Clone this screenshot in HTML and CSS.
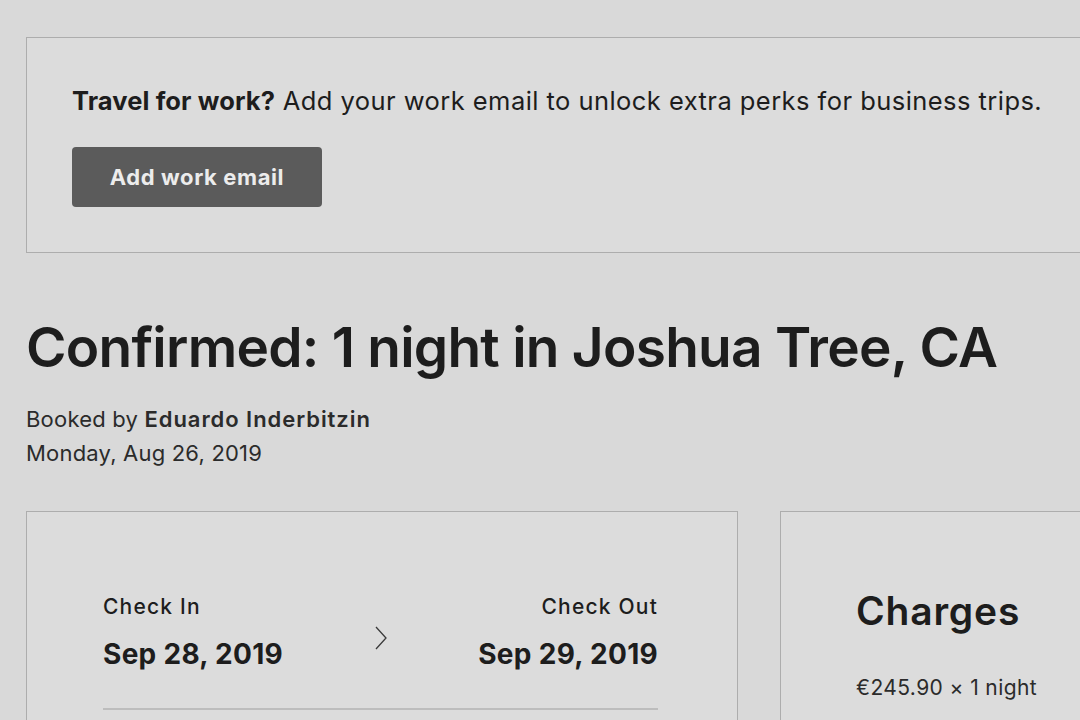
FILE: index.html
```html
<!DOCTYPE html>
<html lang="en">
<head>
<meta charset="utf-8">
<title>Trip confirmed</title>
<link rel="stylesheet" href="styles.css">
</head>
<body>
<div class="page">
  <section class="card promo">
    <p class="promo-text"><strong>Travel for work?</strong> Add your work email to unlock extra perks for business trips.</p>
    <button class="btn">Add work email</button>
  </section>

  <header class="title-block">
    <h1 class="title">Confirmed: 1 night in Joshua Tree, CA</h1>
    <p class="meta">Booked by <strong>Eduardo Inderbitzin</strong></p>
    <p class="meta">Monday, Aug 26, 2019</p>
  </header>

  <div class="columns">
    <section class="card stay">
      <div class="dates">
        <div class="date">
          <div class="date-label">Check In</div>
          <div class="date-value">Sep 28, 2019</div>
        </div>
        <svg class="chev" width="14" height="26" viewBox="0 0 14 26"><path d="M2 2 L12 13 L2 24" fill="none" stroke="#3a3a3a" stroke-width="1.3"/></svg>
        <div class="date right">
          <div class="date-label">Check Out</div>
          <div class="date-value">Sep 29, 2019</div>
        </div>
      </div>
      <div class="divider"></div>
    </section>
    <section class="card charges">
      <h2 class="charges-title">Charges</h2>
      <p class="charge-line">€245.90 × 1 night</p>
    </section>
  </div>
</div>
</body>
</html>
```

FILE: styles.css
```css
html, body {
  margin: 0;
  padding: 0;
  background: #d9d9d9;
  overflow: hidden;
  height: 720px;
}
body {
  font-family: Inter, "Noto Sans", sans-serif;
  color: #1d1d1d;
}
.page {
  width: 1120px;
  padding: 37px 0 0 26px;
}
.card {
  border: 1px solid #adadad;
  background: #dcdcdc;
  box-sizing: border-box;
}
.promo {
  padding: 47px 44px 45px 45px;
}
.promo-text {
  margin: 0;
  font-size: 25.5px;
  line-height: 32px;
  letter-spacing: 0.45px;
}
.promo-text strong {
  font-weight: 700;
  letter-spacing: 0.1px;
}
.btn {
  margin-top: 30px;
  display: block;
  width: 250px;
  height: 60px;
  border: none;
  border-radius: 4px;
  background: #5b5b5b;
  color: #ececec;
  font-family: inherit;
  font-size: 22px;
  font-weight: 700;
  letter-spacing: 0.6px;
}
.title-block {
  padding-top: 62px;
}
.title {
  margin: 0 0 23px;
  font-size: 55px;
  line-height: 64px;
  font-weight: 600;
  letter-spacing: -0.75px;
}
.meta {
  margin: 0;
  font-size: 22px;
  line-height: 34px;
  color: #2b2b2b;
  letter-spacing: 0.2px;
}
.meta strong {
  font-weight: 600;
  letter-spacing: 0.95px;
}
.columns {
  margin-top: 41px;
  display: grid;
  grid-template-columns: 712px 1fr;
  column-gap: 42px;
}
.stay {
  padding: 82px 79px 0 76px;
  height: 260px;
}
.dates {
  display: flex;
  align-items: center;
  justify-content: space-between;
}
.date-label {
  font-size: 21px;
  font-weight: 500;
  line-height: 26px;
  letter-spacing: 1.2px;
}
.date-value {
  margin-top: 18px;
  font-size: 28px;
  font-weight: 700;
  line-height: 32px;
  letter-spacing: 0.3px;
}
.right {
  text-align: right;
}
.chev {
  margin-top: 12px;
}
.divider {
  margin-top: 38px;
  height: 2px;
  background: #bdbdbd;
}
.charges {
  padding: 76px 0 0 75px;
  height: 260px;
}
.charges-title {
  margin: 0;
  font-size: 39px;
  line-height: 46px;
  font-weight: 600;
  letter-spacing: 0.8px;
}
.charge-line {
  margin: 40px 0 0;
  font-size: 21px;
  line-height: 28px;
  color: #2b2b2b;
  letter-spacing: 0.4px;
}
```
